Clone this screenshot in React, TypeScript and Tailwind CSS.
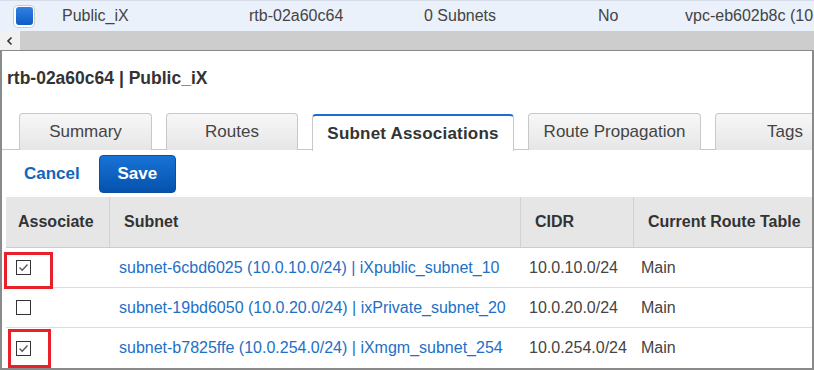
import React from 'react'

const font = "font-['Liberation_Sans',Arial,sans-serif]"

interface Row {
  id: string
  cidr: string
  name: string
  checked: boolean
  mark?: string
}

const rows: Row[] = [
  {
    id: 'subnet-6cbd6025',
    cidr: '10.0.10.0/24',
    name: 'iXpublic_subnet_10',
    checked: true,
    mark: 'left-[-2px] top-[4px] w-[49px] h-[37px]',
  },
  { id: 'subnet-19bd6050', cidr: '10.0.20.0/24', name: 'ixPrivate_subnet_20', checked: false },
  {
    id: 'subnet-b7825ffe',
    cidr: '10.0.254.0/24',
    name: 'iXmgm_subnet_254',
    checked: true,
    mark: 'left-[2px] top-[1px] w-[43px] h-[39px]',
  },
]

function CheckBox({ checked }: { checked: boolean }) {
  return (
    <div className="w-[15px] h-[15px] border border-[#333] bg-white flex items-center justify-center">
      {checked && (
        <svg width="11" height="11" viewBox="0 0 11 11">
          <path d="M1.5 5.5 L4.2 8.2 L9.5 2.5" fill="none" stroke="#555" strokeWidth="1.3" />
        </svg>
      )}
    </div>
  )
}

function Tab({ label, width, active }: { label: string; width: string; active?: boolean }) {
  if (active) {
    return (
      <div
        className={`${width} h-[37px] mt-px -mb-px bg-white border border-b-0 border-[#c8c8c8] border-t-2 border-t-[#1a6fce] rounded-t-[4px] flex items-center justify-center text-[17px] font-bold text-[#333] tracking-[0.2px]`}
      >
        {label}
      </div>
    )
  }
  return (
    <div
      className={`${width} h-[37px] bg-gradient-to-b from-[#f7f7f7] to-[#e6e6e6] border border-b-0 border-[#c8c8c8] rounded-t-[4px] flex items-center justify-center text-[17px] text-[#444] shrink-0`}
    >
      {label}
    </div>
  )
}

export default function App() {
  return (
    <div className={`w-[814px] h-[370px] overflow-hidden bg-white ${font}`}>
      {/* selected list row */}
      <div className="h-[31px] bg-[#eaf1fb] border-t border-[#d6dde8] flex items-center text-[16px] text-[#444] whitespace-nowrap overflow-hidden">
        <div className="w-[62px] pl-[13px] shrink-0">
          <div className="w-[22px] h-[23px] rounded-[5px] border border-[#c9c9c9] bg-white flex items-center justify-center">
            <div className="w-[17px] h-[18px] rounded-[3px] bg-gradient-to-b from-[#2f80e4] to-[#0f5cc4]" />
          </div>
        </div>
        <div className="w-[187px] shrink-0">Public_iX</div>
        <div className="w-[175px] shrink-0">rtb-02a60c64</div>
        <div className="w-[174px] shrink-0">0 Subnets</div>
        <div className="w-[87px] shrink-0">No</div>
        <div className="shrink-0">vpc-eb602b8c (10.0.0.0/16)</div>
      </div>

      {/* horizontal scrollbar */}
      <div className="h-[19px] flex">
        <div className="w-[20px] bg-[#f1f1f1] flex items-center justify-center">
          <svg width="10" height="10" viewBox="0 0 10 10">
            <path d="M6.5 1.5 L3 5 L6.5 8.5" fill="none" stroke="#333" strokeWidth="1.6" />
          </svg>
        </div>
        <div className="flex-1 bg-[#cdcdcd]" />
      </div>

      {/* details panel */}
      <div className="h-[320px] border-x-2 border-t border-b-2 border-[#8a8a8a] overflow-hidden">
        <div className="pt-[18px] pl-[5px] text-[17.5px] font-bold text-[#333] leading-[19px]">
          rtb-02a60c64 | Public_iX
        </div>

        <div className="mt-[25px] pl-[17px] flex gap-[14px] border-b border-[#c8c8c8] h-[37px] whitespace-nowrap">
          <Tab label="Summary" width="w-[133px]" />
          <Tab label="Routes" width="w-[132px]" />
          <Tab label="Subnet Associations" width="w-[202px] shrink-0" active />
          <Tab label="Route Propagation" width="w-[173px]" />
          <Tab label="Tags" width="w-[140px]" />
        </div>

        <div className="h-[47px] flex items-center pl-[22px] gap-[19px]">
          <span className="text-[17px] font-bold text-[#1166bb]">Cancel</span>
          <div className="w-[77px] h-[38px] rounded-[4px] bg-gradient-to-b from-[#1873d6] to-[#0552ad] border border-[#0a4f9e] flex items-center justify-center text-[17px] font-bold text-white">
            Save
          </div>
        </div>

        {/* subnet table */}
        <div className="ml-[4px] text-[16px]">
          <div className="h-[51px] bg-[#e6e6e6] border-b border-[#cccccc] flex font-bold text-[#333] text-[16px]">
            <div className="w-[103px] pl-[12px] flex items-center">Associate</div>
            <div className="w-[411px] pl-[14px] flex items-center border-l border-[#d2d2d2]">Subnet</div>
            <div className="w-[113px] pl-[14px] flex items-center border-l border-[#d2d2d2]">CIDR</div>
            <div className="flex-1 pl-[14px] flex items-center border-l border-[#d2d2d2] whitespace-nowrap">
              Current Route Table
            </div>
          </div>
          {rows.map((r, i) => (
            <div
              key={r.id}
              className={`relative h-[40px] flex items-center whitespace-nowrap ${i < rows.length - 1 ? 'border-b border-[#dddddd]' : ''}`}
            >
              <div className="w-[103px] pl-[10px]">
                <CheckBox checked={r.checked} />
              </div>
              <div className="w-[411px] pl-[10px] text-[#1e6fc6]">
                {r.id} ({r.cidr}) | {r.name}
              </div>
              <div className="w-[113px] pl-[9px] text-[#444]">{r.cidr}</div>
              <div className="flex-1 pl-[8px] text-[#444]">Main</div>
              {r.mark && <div className={`absolute ${r.mark} border-[3px] border-[#e8202a]`} />}
            </div>
          ))}
        </div>
      </div>
    </div>
  )
}
